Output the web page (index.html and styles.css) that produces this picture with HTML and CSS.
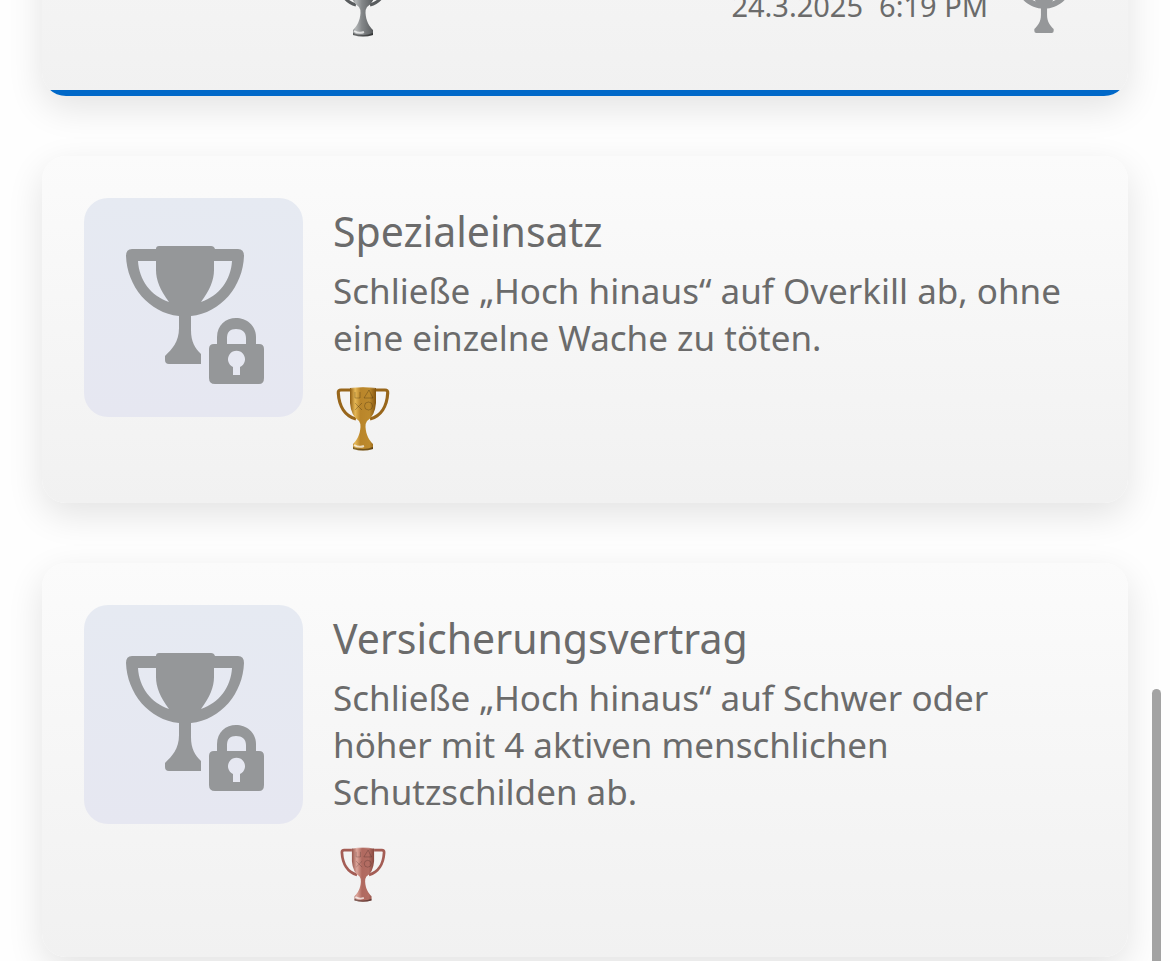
FILE: index.html
```html
<!DOCTYPE html>
<html lang="de">
<head>
<meta charset="utf-8">
<meta name="viewport" content="width=device-width, initial-scale=1">
<title>Spezialeinsatz</title>
<link rel="stylesheet" href="styles.css">
</head>
<body>
<svg class="defs" aria-hidden="true">
  <defs>
    <linearGradient id="silver" x1="0" x2="1" y1="0" y2="0"><stop offset="0" stop-color="#66696b"/><stop offset=".22" stop-color="#b4b7b8"/><stop offset=".45" stop-color="#85888a"/><stop offset=".75" stop-color="#696c6e"/><stop offset="1" stop-color="#3f4244"/></linearGradient>
    <linearGradient id="gold" x1="0" x2="1" y1="0" y2="0"><stop offset="0" stop-color="#8f5d12"/><stop offset=".2" stop-color="#e6b856"/><stop offset=".4" stop-color="#b9852a"/><stop offset=".75" stop-color="#bd8a2d"/><stop offset="1" stop-color="#835410"/></linearGradient>
    <linearGradient id="bronze" x1="0" x2="1" y1="0" y2="0"><stop offset="0" stop-color="#94544b"/><stop offset=".22" stop-color="#dda69b"/><stop offset=".45" stop-color="#b0695f"/><stop offset=".75" stop-color="#b36d63"/><stop offset="1" stop-color="#87483f"/></linearGradient>
    <symbol id="cup" viewBox="0 0 219 219">
      <path fill-rule="evenodd" d="M75 48H127Q130 48 131 51H154Q160 51 160 58C159 88 137 115 107 118V132C107 144 111 150 117 156V166H85Q81 166 81 162V158C88 151 95 144 95 130V118C65 115 43 88 42 58Q42 51 48 51H72Q72 48 75 48ZM54 63C55 82 67 98 85 104C76 92 72 82 72 72V63ZM130 63V72C130 82 126 92 117 104C135 98 147 82 148 63Z"/>
    </symbol>
    <symbol id="cup-whole" viewBox="42 48 118 118">
      <path fill-rule="evenodd" d="M75 48H127Q130 48 131 51H154Q160 51 160 58C159 88 137 115 107 118V130C107 144 113 151 120 158V162Q120 166 116 166H86Q82 166 82 162V158C89 151 95 144 95 130V118C65 115 43 88 42 58Q42 51 48 51H72Q72 48 75 48ZM54 63C55 82 67 98 85 104C76 92 72 82 72 72V63ZM130 63V72C130 82 126 92 117 104C135 98 147 82 148 63Z"/>
    </symbol>
    <symbol id="lock" viewBox="0 0 219 219">
      <path fill-rule="evenodd" d="M133 146V139C133 127 142 120 152 120S172 127 172 139V146H175Q180 146 180 151V180Q180 186 175 186H131Q125 186 125 180V151Q125 146 130 146ZM143 146H162V140C162 134 158 131 152 131S143 134 143 140ZM149 169V177H156V169A8.5 8.5 0 1 0 149 169Z"/>
    </symbol>
    <symbol id="award" viewBox="0 0 60 70">
      <path d="M17 5H8Q5 5 5.300 8C6 21 12 31 23 34M43 5H52Q55 5 54.700 8C54 21 48 31 37 34" fill="none" stroke="currentColor" stroke-width="3.200"/>
      <path d="M17 3Q30 1 43 3V18Q42 31 34 36Q32.500 38 32.500 42C33 50 36 55 40 59V64Q30 67 20 64V59C24 55 27 50 27.500 42Q27.500 38 26 36Q18 31 17 18Z"/>
      <path d="M18 3Q30 1 42 3" fill="none" stroke="#fff" stroke-opacity=".35"/>
      <g fill="none" stroke="#000" stroke-opacity=".22"><path d="M22 7V13H27V7M31 13L36 5L40 13ZM22 18L29 25M29 18L22 25"/><circle cx="35.500" cy="21" r="4"/></g>
      <path d="M20 62Q30 66 40 62V64Q30 67 20 64Z" fill="#000" fill-opacity=".4"/>
      <path d="M21 60Q26 63 31 61" fill="none" stroke="#fff" stroke-opacity=".7" stroke-width="2"/>
    </symbol>
  </defs>
</svg>
<main class="page">
  <ul class="list">
    <li class="card card-earned">
      <div class="earned-row">
        <svg class="award award-silver" role="img" aria-label="Silber"><use href="#award"/></svg>
        <div class="earned">
          <time class="stamp"><span>24.3.2025</span><span>6:19 PM</span></time>
          <svg class="rarity" aria-hidden="true"><use href="#cup-whole"/></svg>
        </div>
      </div>
    </li>
    <li class="card">
      <svg class="tile" viewBox="0 0 219 219" aria-hidden="true"><use href="#cup"/><use href="#lock"/></svg>
      <div class="body">
        <h2 class="title">Spezialeinsatz</h2>
        <p class="text">Schließe „Hoch hinaus“ auf Overkill ab, ohne eine einzelne Wache zu töten.</p>
        <svg class="award award-gold" role="img" aria-label="Gold"><use href="#award"/></svg>
      </div>
    </li>
    <li class="card">
      <svg class="tile" viewBox="0 0 219 219" aria-hidden="true"><use href="#cup"/><use href="#lock"/></svg>
      <div class="body">
        <h2 class="title">Versicherungsvertrag</h2>
        <p class="text">Schließe „Hoch hinaus“ auf Schwer oder höher mit 4 aktiven menschlichen Schutzschilden ab.</p>
        <svg class="award award-bronze" viewBox="-5 -8 70 82" role="img" aria-label="Bronze"><use href="#award" width="60" height="70"/></svg>
      </div>
    </li>
  </ul>
  <div class="scroll-thumb"></div>
</main>
</body>
</html>
```
FILE: styles.css
```css
* { box-sizing: border-box; }

body {
  margin: 0;
  background: #fefefe;
  color: #6b6b6b;
  font-family: "Noto Sans", "Open Sans", sans-serif;
}

.defs {
  position: absolute;
  width: 0;
  height: 0;
}

.page {
  position: relative;
  height: 100vh;
  overflow: hidden;
}

.list {
  display: flex;
  flex-direction: column;
  gap: 60px;
  margin: -60px 0 0;
  padding: 0 42px;
  list-style: none;
}

.card {
  display: flex;
  align-items: flex-start;
  gap: 30px;
  padding: 42px 42px 48px;
  border-radius: 24px;
  background: linear-gradient(#fbfbfb, #f1f1f1);
  box-shadow: 0 12px 36px rgba(0, 0, 0, 0.11);
}

.card-earned {
  padding: 28px 54px 52px 291px;
  background: linear-gradient(#0068c8, #0068c8) bottom / 100% 6px no-repeat, linear-gradient(#f5f5f5, #f1f1f1);
}

.earned-row {
  display: flex;
  flex: 1;
  align-items: center;
  justify-content: space-between;
  height: 76px;
}

.earned {
  display: flex;
  align-items: center;
  gap: 26px;
}

.stamp {
  display: flex;
  gap: 16px;
  font-size: 29px;
  line-height: 40px;
}

.rarity {
  width: 60px;
  height: 60px;
  margin-bottom: 6px;
  fill: #959799;
}

.tile {
  flex: none;
  width: 219px;
  height: 219px;
  border-radius: 24px;
  background: linear-gradient(#e6eaf2, #e6e7f1);
  fill: #959799;
}

.body {
  flex: 1;
  padding-top: 5px;
}

.title {
  margin: 0 0 8px;
  font-size: 41px;
  font-weight: 400;
  line-height: 56px;
}

.text {
  margin: 0 0 24px;
  font-size: 35px;
  line-height: 47px;
}

.award {
  display: block;
  width: 60px;
  height: 70px;
}

.award-silver { fill: url(#silver); color: #595c5e; }
.award-gold { fill: url(#gold); color: #98661b; }
.award-bronze { fill: url(#bronze); color: #a45d55; }

.scroll-thumb {
  position: absolute;
  top: 689px;
  right: 9px;
  bottom: -9px;
  width: 9px;
  border-radius: 5px;
  background: #a3a3a3;
}
```
